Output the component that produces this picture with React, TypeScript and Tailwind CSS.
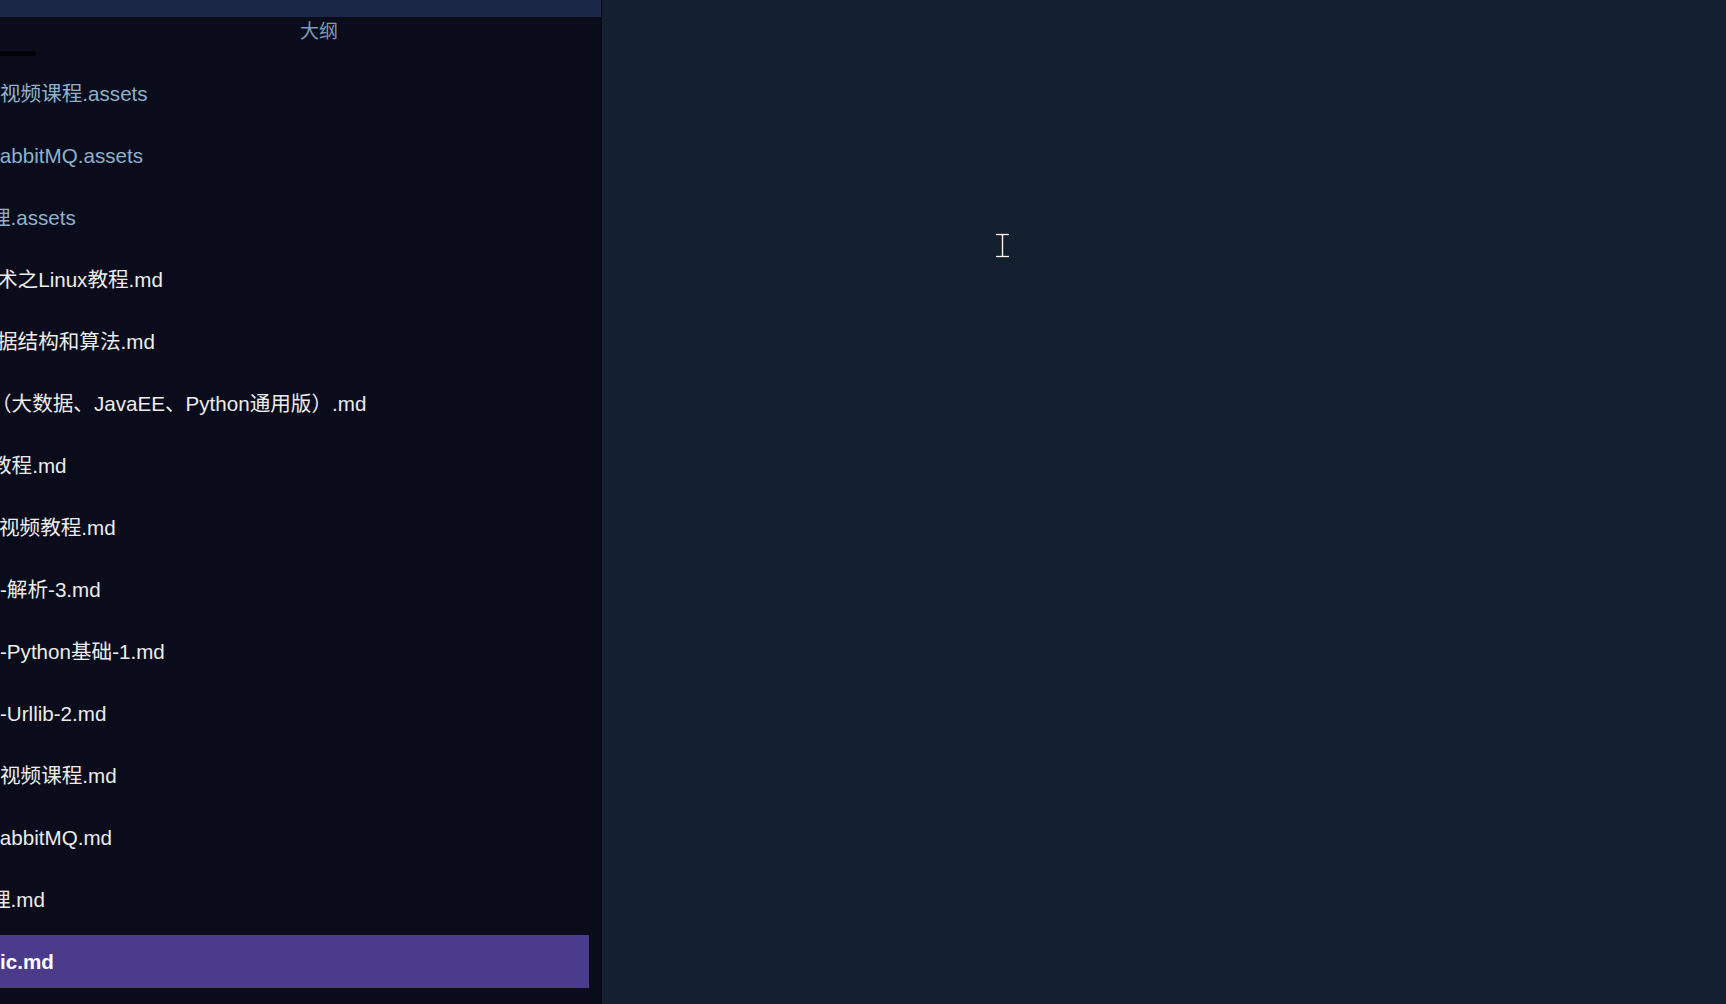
import React from "react";

type Row = { text: string; kind: "assets" | "md" | "active"; ml: number };

const rows: Row[] = [
  { text: "视频课程.assets", kind: "assets", ml: 0 },
  { text: "RabbitMQ.assets", kind: "assets", ml: -15 },
  { text: "理.assets", kind: "assets", ml: -10 },
  { text: "术之Linux教程.md", kind: "md", ml: -3 },
  { text: "据结构和算法.md", kind: "md", ml: -3 },
  { text: "（大数据、JavaEE、Python通用版）.md", kind: "md", ml: -9 },
  { text: "教程.md", kind: "md", ml: -9 },
  { text: "视频教程.md", kind: "md", ml: -1 },
  { text: "-解析-3.md", kind: "md", ml: 0 },
  { text: "-Python基础-1.md", kind: "md", ml: 0 },
  { text: "-Urllib-2.md", kind: "md", ml: 0 },
  { text: "视频课程.md", kind: "md", ml: 0 },
  { text: "RabbitMQ.md", kind: "md", ml: -15 },
  { text: "理.md", kind: "md", ml: -10 },
  { text: "ic.md", kind: "active", ml: 0 },
];

export default function App() {
  return (
    <div
      className="relative flex h-[1004px] w-[1726px] overflow-hidden bg-[#132030]"
      style={{ fontFamily: '"Liberation Sans", Arial, "Noto Sans CJK SC", sans-serif' }}
    >
      <aside className="flex h-full w-[602px] shrink-0 flex-col overflow-hidden bg-[#0a0c1c]">
        <div className="h-[17px] w-[601px] shrink-0 bg-[#1b2746]" />
        <div className="relative h-[50px] shrink-0">
          <div className="pl-[36px] pt-[2px] text-center text-[19px] leading-[26px] text-[#7c9cb8]">大纲</div>
          <div className="absolute left-0 top-[34px] h-[5px] w-[36px] rounded-r-sm bg-[#020306]" />
        </div>
        <div className="flex flex-col gap-[9px] pr-[13px]">
          {rows.map((r, i) => (
            <div
              key={i}
              className={
                r.kind === "active"
                  ? "flex h-[53px] items-center overflow-hidden whitespace-nowrap bg-[#4a3b8b] pt-[2px]"
                  : "flex h-[53px] items-center overflow-hidden whitespace-nowrap pt-[2px]"
              }
            >
              <span
                className={
                  r.kind === "assets"
                    ? "text-[20.6px] leading-none text-[#8db2ca]"
                    : r.kind === "md"
                    ? "text-[20.6px] leading-none text-[#ececec]"
                    : "text-[20.6px] font-bold leading-none text-white"
                }
                style={{ marginLeft: r.ml }}
              >
                {r.text}
              </span>
            </div>
          ))}
        </div>
      </aside>
      <main className="flex-1 bg-[#132030]" />
      <svg
        className="absolute left-[995px] top-[233px]"
        width="15"
        height="25"
        viewBox="0 0 15 25"
      >
        <path d="M1 1.5h13M1 23.5h13M7.5 1.5v22" stroke="#000" strokeWidth="3" />
        <path d="M1 1.5h13M1 23.5h13M7.5 1.5v22" stroke="#f4f4f0" strokeWidth="1.6" />
      </svg>
    </div>
  );
}
